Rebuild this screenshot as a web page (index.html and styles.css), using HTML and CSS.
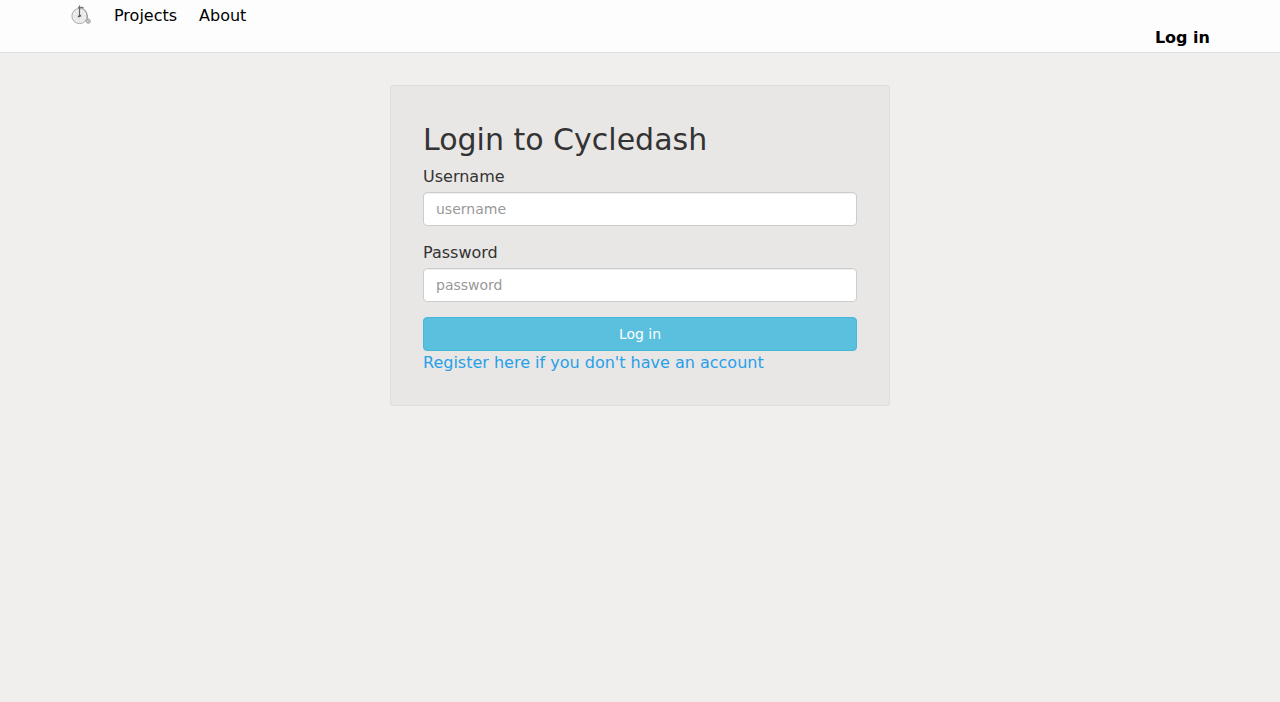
FILE: index.html
```html
<!DOCTYPE html>
<html lang="en">
<head>
<meta charset="utf-8">
<title>Cycledash</title>
<link rel="stylesheet" href="styles.css">
</head>
<body>
<header class="site-header">
  <nav class="container nav">
    <a class="logo" href="#" aria-label="Cycledash">
      <svg width="22" height="22" viewBox="0 0 22 22" fill="none">
        <circle cx="9.5" cy="12" r="7.6" fill="#eee" stroke="#aaa"/>
        <path d="M9.5 12L4 7M9.5 12L15 7M9.5 12H2M9.5 12H17M9.5 12L4 17M9.5 12L15 17M9.5 12V19" stroke="#dadada" stroke-width=".6"/>
        <path d="M9.5 12V1.5" stroke="#666" stroke-width="1.2"/>
        <path d="M8 3.5H13.5" stroke="#777" stroke-width="1.3"/>
        <path d="M12 4C15.500 5.500 17.200 9 17.800 15" stroke="#999"/>
        <path d="M8 12.700L11 11.500" stroke="#555" stroke-width="1.600"/>
        <circle cx="18.300" cy="17.300" r="2" fill="#ddd" stroke="#999"/>
        <circle cx="18.300" cy="17.300" r=".6" fill="#777"/>
      </svg>
    </a>
    <a class="nav-link" href="#">Projects</a>
    <a class="nav-link" href="#">About</a>
    <a class="login-link" href="#">Log in</a>
  </nav>
</header>
<main class="panel">
  <h1 class="title">Login to Cycledash</h1>
  <form class="form">
    <div class="field">
      <label class="label" for="username">Username</label>
      <input class="input" id="username" type="text" placeholder="username">
    </div>
    <div class="field">
      <label class="label" for="password">Password</label>
      <input class="input" id="password" type="password" placeholder="password">
    </div>
    <button class="button" type="submit">Log in</button>
  </form>
  <a class="register" href="#">Register here if you don't have an account</a>
</main>
</body>
</html>
```
FILE: styles.css
```css
* { box-sizing: border-box; }
body {
  margin: 0;
  background: #f0efed;
  color: #333;
  font: 16px/24px Verdana, "DejaVu Sans", sans-serif;
}
a { text-decoration: none; }
.site-header {
  background: #fdfdfd;
  border-bottom: 1px solid #e0dfdd;
}
.container {
  max-width: 1140px;
  margin: 0 auto;
}
.nav {
  display: flex;
  align-items: flex-start;
  gap: 22px;
  padding-top: 4px;
}
.logo, .logo svg { display: block; }
.nav-link, .login-link { color: #000; }
.login-link {
  margin: 22px 0 2px auto;
  font-weight: bold;
}
.panel {
  max-width: 500px;
  margin: 32px auto;
  padding: 32px 32px 30px;
  background: #e8e7e5;
  border: 1px solid #dedddb;
  border-radius: 3px;
}
.title {
  margin: 0 0 3px;
  font-size: 30px;
  line-height: 44px;
  font-weight: normal;
}
.field { margin-bottom: 15px; }
.label { display: block; margin-bottom: 3px; }
.input, .button {
  display: block;
  width: 100%;
  height: 34px;
  padding: 6px 12px;
  border: 1px solid #ccc;
  border-radius: 4px;
  font: 14px/20px Verdana, "DejaVu Sans", sans-serif;
}
.input { background: #fff; box-shadow: inset 0 1px 1px #eee; }
.input::placeholder { color: #999; opacity: 1; }
.button { background: #5bc0de; border-color: #46b8da; color: #fff; }
.register { display: block; color: #27a0ea; }
```
